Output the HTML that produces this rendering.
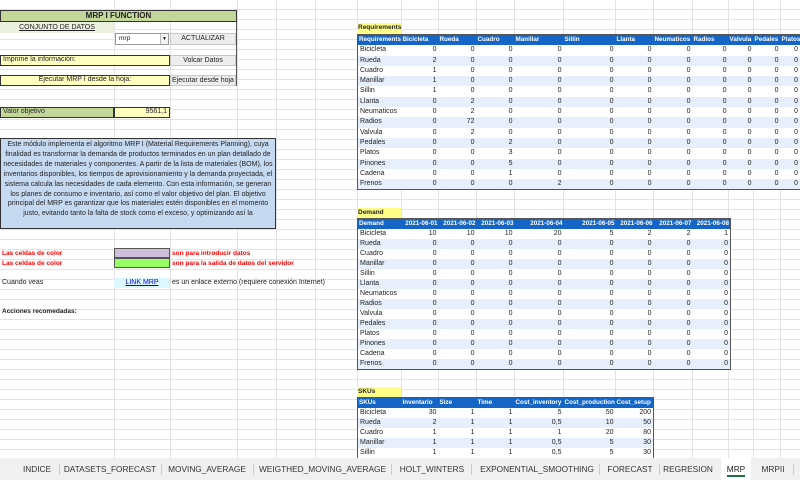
<!DOCTYPE html>
<html><head><meta charset="utf-8">
<style>
*{margin:0;padding:0;box-sizing:border-box}
body{width:800px;height:480px;overflow:hidden;background:#fff;font-family:"Liberation Sans",Arial,sans-serif;font-size:7px;color:#222;position:relative}
.grid{position:absolute;left:0;top:0;width:800px;height:458px;
background-image:repeating-linear-gradient(to bottom,transparent 0,transparent 9px,#e3e3e3 9px,#e3e3e3 10px);}
.vl{position:absolute;top:0;height:458px;width:1px;background:#e3e3e3}
.a{position:absolute;white-space:nowrap;line-height:10px}
table{position:absolute;border-collapse:collapse;table-layout:fixed;background:#fff}
td{height:10px;line-height:10px;padding:0 2px;font-size:7px;text-align:right;white-space:nowrap;overflow:hidden}
td:first-child{text-align:left}
.r td{height:10.3px;line-height:10.3px}
tr.h td{background:#1565c6;color:#fff;font-weight:bold;text-align:left;font-size:6.3px;padding:0 1px}
tr:nth-child(odd):not(.h) td{background:#e6effb}
.t{border:1px solid #555}
.btn{position:absolute;background:#ededed;border:1px solid #c8c8c8;text-align:center;line-height:10px;font-size:7px}
.tabs{position:absolute;left:0;top:458px;width:800px;height:22px;background:#f0f0f0;font-size:8.3px;color:#333}
.tab{position:absolute;top:0;height:22px;line-height:22px;text-align:center;white-space:nowrap}
.sep{position:absolute;top:6px;width:1px;height:11px;background:#ccc}
</style></head><body>
<div class="grid"></div>
<div class="vl" style="left:114px"></div><div class="vl" style="left:170px"></div><div class="vl" style="left:237px"></div><div class="vl" style="left:276px"></div><div class="vl" style="left:315px"></div><div class="vl" style="left:357px"></div><div class="vl" style="left:401px"></div><div class="vl" style="left:438px"></div><div class="vl" style="left:476px"></div><div class="vl" style="left:514px"></div><div class="vl" style="left:563px"></div><div class="vl" style="left:615px"></div><div class="vl" style="left:653px"></div><div class="vl" style="left:692px"></div><div class="vl" style="left:728px"></div><div class="vl" style="left:753px"></div><div class="vl" style="left:780px"></div>

<!-- left panel -->
<div class="a" style="left:0;top:10px;width:237px;height:12px;background:#c4d79b;border:1.5px solid #333;text-align:center;font-weight:bold;font-size:8px;line-height:10px">MRP I FUNCTION</div>
<div class="a" style="left:0;top:22px;width:114px;height:11px;background:#ebf1de;text-align:center;text-decoration:underline;line-height:11px">CONJUNTO DE DATOS</div>
<div style="position:absolute;left:0;top:22px;width:237px;height:64px;border-right:1.5px solid #555"></div>
<div class="a" style="left:115px;top:33px;width:54px;height:12px;border:1px solid #999;background:#fff;padding-left:3px;font-size:6.5px;line-height:10px">mrp<span style="position:absolute;right:0;top:0;width:8px;height:10px;border-left:1px solid #bbb;background:#f3f3f3;font-size:5px;text-align:center">▼</span></div>
<div class="btn" style="left:170px;top:33px;width:66px;height:12px">ACTUALIZAR</div>
<div class="a" style="left:0;top:55px;width:170px;height:11px;background:#ffffc0;border:1.5px solid #333;padding-left:2px;line-height:8px">Imprime la información:</div>
<div class="btn" style="left:170px;top:55px;width:66px;height:11px">Volcar Datos</div>
<div class="a" style="left:0;top:75px;width:170px;height:11px;background:#ffffc0;border:1.5px solid #333;text-align:center;line-height:8px">Ejecutar MRP I desde la hoja:</div>
<div class="btn" style="left:170px;top:75px;width:66px;height:11px">Ejecutar desde hoja</div>
<div class="a" style="left:0;top:107px;width:114px;height:11px;background:#c4d79b;border:1.5px solid #333;padding-left:2px;line-height:8px">Valor objetivo</div>
<div class="a" style="left:114px;top:107px;width:56px;height:11px;background:#ffffc0;border:1.5px solid #333;text-align:right;padding-right:2px;line-height:8px">9561,1</div>
<div class="a" style="left:0;top:138px;width:276px;height:91px;background:#c5d9f1;border:1.5px solid #333;text-align:center;white-space:normal;line-height:9.9px;padding:1px 2px;overflow:hidden">Este módulo implementa el algoritmo MRP I (Material Requirements Planning), cuya finalidad es transformar la demanda de productos terminados en un plan detallado de necesidades de materiales y componentes. A partir de la lista de materiales (BOM), los inventarios disponibles, los tiempos de aprovisionamiento y la demanda proyectada, el sistema calcula las necesidades de cada elemento. Con esta información, se generan los planes de consumo e inventario, así como el valor objetivo del plan. El objetivo principal del MRP es garantizar que los materiales estén disponibles en el momento justo, evitando tanto la falta de stock como el exceso, y optimizando así la</div>
<div class="a" style="left:2px;top:249px;color:#f00;font-weight:bold;font-size:6.5px">Las celdas de color</div>
<div class="a" style="left:2px;top:259px;color:#f00;font-weight:bold;font-size:6.5px">Las celdas de color</div>
<div class="a" style="left:114px;top:248px;width:56px;height:10px;background:#ccc0da;border:1px solid #555"></div>
<div class="a" style="left:114px;top:258px;width:56px;height:10px;background:#99ff66;border:1px solid #555"></div>
<div class="a" style="left:172px;top:249px;color:#f00;font-weight:bold;font-size:6.5px">son para introducir datos</div>
<div class="a" style="left:172px;top:259px;color:#f00;font-weight:bold;font-size:6.5px">son para la salida de datos del servidor</div>
<div class="a" style="left:2px;top:278px">Cuando veas</div>
<div class="a" style="left:114px;top:278px;width:56px;height:10px;background:#ddf7ff;color:#00f;text-decoration:underline;text-align:center">LINK MRP</div>
<div class="a" style="left:172px;top:278px">es un enlace externo (requiere conexión Internet)</div>
<div class="a" style="left:2px;top:307px;font-weight:bold;font-size:6.5px">Acciones recomedadas:</div>

<!-- Requirements -->
<div class="a" style="left:357px;top:23px;width:44px;height:10px;background:#ffff88;font-weight:bold;padding-left:1px;font-size:6.5px">Requirements</div>
<table class="t r" style="left:357px;top:34px;width:443px">
<colgroup><col style="width:44px"><col style="width:37px"><col style="width:38px"><col style="width:38px"><col style="width:49px"><col style="width:52px"><col style="width:38px"><col style="width:39px"><col style="width:36px"><col style="width:25px"><col style="width:27px"><col style="width:20px"></colgroup>
<tr class="h"><td>Requirements</td><td>Bicicleta</td><td>Rueda</td><td>Cuadro</td><td>Manillar</td><td>Sillín</td><td>Llanta</td><td>Neumaticos</td><td>Radios</td><td>Valvula</td><td>Pedales</td><td>Platos</td></tr>
<tr><td>Bicicleta</td><td>0</td><td>0</td><td>0</td><td>0</td><td>0</td><td>0</td><td>0</td><td>0</td><td>0</td><td>0</td><td>0</td></tr>
<tr><td>Rueda</td><td>2</td><td>0</td><td>0</td><td>0</td><td>0</td><td>0</td><td>0</td><td>0</td><td>0</td><td>0</td><td>0</td></tr>
<tr><td>Cuadro</td><td>1</td><td>0</td><td>0</td><td>0</td><td>0</td><td>0</td><td>0</td><td>0</td><td>0</td><td>0</td><td>0</td></tr>
<tr><td>Manillar</td><td>1</td><td>0</td><td>0</td><td>0</td><td>0</td><td>0</td><td>0</td><td>0</td><td>0</td><td>0</td><td>0</td></tr>
<tr><td>Sillin</td><td>1</td><td>0</td><td>0</td><td>0</td><td>0</td><td>0</td><td>0</td><td>0</td><td>0</td><td>0</td><td>0</td></tr>
<tr><td>Llanta</td><td>0</td><td>2</td><td>0</td><td>0</td><td>0</td><td>0</td><td>0</td><td>0</td><td>0</td><td>0</td><td>0</td></tr>
<tr><td>Neumaticos</td><td>0</td><td>2</td><td>0</td><td>0</td><td>0</td><td>0</td><td>0</td><td>0</td><td>0</td><td>0</td><td>0</td></tr>
<tr><td>Radios</td><td>0</td><td>72</td><td>0</td><td>0</td><td>0</td><td>0</td><td>0</td><td>0</td><td>0</td><td>0</td><td>0</td></tr>
<tr><td>Valvula</td><td>0</td><td>2</td><td>0</td><td>0</td><td>0</td><td>0</td><td>0</td><td>0</td><td>0</td><td>0</td><td>0</td></tr>
<tr><td>Pedales</td><td>0</td><td>0</td><td>2</td><td>0</td><td>0</td><td>0</td><td>0</td><td>0</td><td>0</td><td>0</td><td>0</td></tr>
<tr><td>Platos</td><td>0</td><td>0</td><td>3</td><td>0</td><td>0</td><td>0</td><td>0</td><td>0</td><td>0</td><td>0</td><td>0</td></tr>
<tr><td>Pinones</td><td>0</td><td>0</td><td>5</td><td>0</td><td>0</td><td>0</td><td>0</td><td>0</td><td>0</td><td>0</td><td>0</td></tr>
<tr><td>Cadena</td><td>0</td><td>0</td><td>1</td><td>0</td><td>0</td><td>0</td><td>0</td><td>0</td><td>0</td><td>0</td><td>0</td></tr>
<tr><td>Frenos</td><td>0</td><td>0</td><td>0</td><td>2</td><td>0</td><td>0</td><td>0</td><td>0</td><td>0</td><td>0</td><td>0</td></tr>
</table>

<!-- Demand -->
<div class="a" style="left:357px;top:208px;width:44px;height:10px;background:#ffff88;font-weight:bold;padding-left:1px;font-size:6.5px">Demand</div>
<table class="t" style="left:357px;top:218px;width:373px">
<colgroup><col style="width:44px"><col style="width:37px"><col style="width:38px"><col style="width:38px"><col style="width:49px"><col style="width:52px"><col style="width:38px"><col style="width:39px"><col style="width:38px"></colgroup>
<tr class="h"><td>Demand</td><td style="text-align:right">2021-06-01</td><td style="text-align:right">2021-06-02</td><td style="text-align:right">2021-06-03</td><td style="text-align:right">2021-06-04</td><td style="text-align:right">2021-06-05</td><td style="text-align:right">2021-06-06</td><td style="text-align:right">2021-06-07</td><td style="text-align:right">2021-06-08</td></tr>
<tr><td>Bicicleta</td><td>10</td><td>10</td><td>10</td><td>20</td><td>5</td><td>2</td><td>2</td><td>1</td></tr>
<tr><td>Rueda</td><td>0</td><td>0</td><td>0</td><td>0</td><td>0</td><td>0</td><td>0</td><td>0</td></tr>
<tr><td>Cuadro</td><td>0</td><td>0</td><td>0</td><td>0</td><td>0</td><td>0</td><td>0</td><td>0</td></tr>
<tr><td>Manillar</td><td>0</td><td>0</td><td>0</td><td>0</td><td>0</td><td>0</td><td>0</td><td>0</td></tr>
<tr><td>Sillin</td><td>0</td><td>0</td><td>0</td><td>0</td><td>0</td><td>0</td><td>0</td><td>0</td></tr>
<tr><td>Llanta</td><td>0</td><td>0</td><td>0</td><td>0</td><td>0</td><td>0</td><td>0</td><td>0</td></tr>
<tr><td>Neumaticos</td><td>0</td><td>0</td><td>0</td><td>0</td><td>0</td><td>0</td><td>0</td><td>0</td></tr>
<tr><td>Radios</td><td>0</td><td>0</td><td>0</td><td>0</td><td>0</td><td>0</td><td>0</td><td>0</td></tr>
<tr><td>Valvula</td><td>0</td><td>0</td><td>0</td><td>0</td><td>0</td><td>0</td><td>0</td><td>0</td></tr>
<tr><td>Pedales</td><td>0</td><td>0</td><td>0</td><td>0</td><td>0</td><td>0</td><td>0</td><td>0</td></tr>
<tr><td>Platos</td><td>0</td><td>0</td><td>0</td><td>0</td><td>0</td><td>0</td><td>0</td><td>0</td></tr>
<tr><td>Pinones</td><td>0</td><td>0</td><td>0</td><td>0</td><td>0</td><td>0</td><td>0</td><td>0</td></tr>
<tr><td>Cadena</td><td>0</td><td>0</td><td>0</td><td>0</td><td>0</td><td>0</td><td>0</td><td>0</td></tr>
<tr><td>Frenos</td><td>0</td><td>0</td><td>0</td><td>0</td><td>0</td><td>0</td><td>0</td><td>0</td></tr>
</table>

<!-- SKUs -->
<div class="a" style="left:357px;top:387px;width:44px;height:10px;background:#ffff88;font-weight:bold;padding-left:1px;font-size:6.5px">SKUs</div>
<table class="t" style="left:357px;top:397px;width:296px">
<colgroup><col style="width:44px"><col style="width:37px"><col style="width:38px"><col style="width:38px"><col style="width:49px"><col style="width:52px"><col style="width:38px"></colgroup>
<tr class="h"><td>SKUs</td><td>Inventario</td><td>Size</td><td>Time</td><td>Cost_inventory</td><td>Cost_production</td><td>Cost_setup</td></tr>
<tr><td>Bicicleta</td><td>30</td><td>1</td><td>1</td><td>5</td><td>50</td><td>200</td></tr>
<tr><td>Rueda</td><td>2</td><td>1</td><td>1</td><td>0,5</td><td>10</td><td>50</td></tr>
<tr><td>Cuadro</td><td>1</td><td>1</td><td>1</td><td>1</td><td>20</td><td>80</td></tr>
<tr><td>Manillar</td><td>1</td><td>1</td><td>1</td><td>0,5</td><td>5</td><td>30</td></tr>
<tr><td>Sillin</td><td>1</td><td>1</td><td>1</td><td>0,5</td><td>5</td><td>30</td></tr>
</table>

<!-- tabs -->
<div class="tabs">
<div class="tab" style="left:14px;width:46px">INDICE</div><div class="sep" style="left:59px"></div>
<div class="tab" style="left:62px;width:96px">DATASETS_FORECAST</div><div class="sep" style="left:161px"></div>
<div class="tab" style="left:164px;width:86px">MOVING_AVERAGE</div><div class="sep" style="left:253px"></div>
<div class="tab" style="left:256px;width:133px">WEIGTHED_MOVING_AVERAGE</div><div class="sep" style="left:391px"></div>
<div class="tab" style="left:394px;width:76px">HOLT_WINTERS</div><div class="sep" style="left:471px"></div>
<div class="tab" style="left:474px;width:126px">EXPONENTIAL_SMOOTHING</div><div class="sep" style="left:599px"></div>
<div class="tab" style="left:602px;width:56px">FORECAST</div><div class="sep" style="left:659px"></div>
<div class="tab" style="left:660px;width:56px">REGRESION</div>
<div class="tab" style="left:721px;width:30px;background:#fff;color:#222">MRP<div style="position:absolute;left:6px;right:6px;bottom:3px;height:2px;background:#217346"></div></div>
<div class="tab" style="left:755px;width:36px">MRPII</div><div class="sep" style="left:793px"></div>
</div>
</body></html>
